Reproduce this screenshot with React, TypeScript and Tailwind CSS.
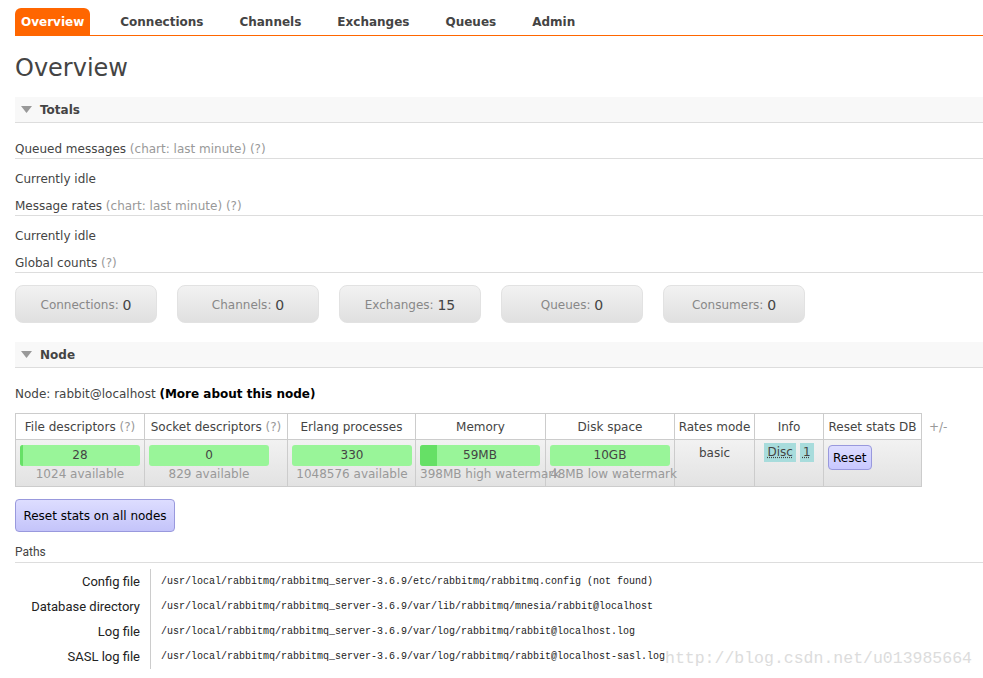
const tabs = ["Overview", "Connections", "Channels", "Exchanges", "Queues", "Admin"];

const counts = [
  { label: "Connections", value: 0 },
  { label: "Channels", value: 0 },
  { label: "Exchanges", value: 15 },
  { label: "Queues", value: 0 },
  { label: "Consumers", value: 0 },
];

const paths = [
  { label: "Config file", value: "/usr/local/rabbitmq/rabbitmq_server-3.6.9/etc/rabbitmq/rabbitmq.config (not found)" },
  { label: "Database directory", value: "/usr/local/rabbitmq/rabbitmq_server-3.6.9/var/lib/rabbitmq/mnesia/rabbit@localhost" },
  { label: "Log file", value: "/usr/local/rabbitmq/rabbitmq_server-3.6.9/var/log/rabbitmq/rabbit@localhost.log" },
  { label: "SASL log file", value: "/usr/local/rabbitmq/rabbitmq_server-3.6.9/var/log/rabbitmq/rabbit@localhost-sasl.log" },
];

function SectionHeader({ title }: Readonly<{ title: string }>) {
  return (
    <div className="flex h-[26px] items-center border-b border-[#ddd] bg-[#f8f8f8] pl-[6px]">
      <svg width="11" height="7" viewBox="0 0 11 7" className="mr-[8px]">
        <polygon points="0,0 11,0 5.5,7" fill="#999" />
      </svg>
      <span className="text-[12px] font-bold text-[#444]">{title}</span>
    </div>
  );
}

function Help() {
  return <span className="text-[#999]">(?)</span>;
}

function Bar({ value, sub, fill }: Readonly<{ value: string; sub: string; fill: number }>) {
  return (
    <div className="w-[120px]">
      <div className="relative h-[21px] overflow-hidden rounded-[3px] bg-[#99f599]">
        <div className="absolute left-0 top-0 h-full bg-[#66e066]" style={{ width: `${fill}px` }} />
        <div className="relative text-center leading-[21px] text-[#444]">{value}</div>
      </div>
      <div className="whitespace-nowrap text-center leading-[16px] text-[#999]">{sub}</div>
    </div>
  );
}

export default function App() {
  return (
    <div
      className="relative min-h-[678px] bg-white pl-[15px] text-[12px] text-[#444]"
      style={{ fontFamily: '"DejaVu Sans", Verdana, sans-serif' }}
    >
      {/* Tabs */}
      <div className="flex gap-[24px] border-b border-[#f60] pt-[8px]">
        {tabs.map((t, i) => (
          <div
            key={t}
            className={
              i === 0
                ? "flex h-[27px] items-center rounded-t-[6px] bg-[#f60] px-[6px] text-[12px] font-bold text-white"
                : "flex h-[27px] items-center px-[6px] text-[12px] font-bold text-[#444]"
            }
          >
            {t}
          </div>
        ))}
      </div>

      <h1 className="mt-[17px] h-[30px] text-[24px] leading-[30px] text-[#444]">Overview</h1>

      <div className="mt-[14px]">
        <SectionHeader title="Totals" />
      </div>

      <div className="mt-[18px] border-b border-[#ddd] pb-[1px] leading-[16px]">
        Queued messages <span className="text-[#999]">(chart: last minute)</span> <Help />
      </div>
      <div className="mt-[12px] leading-[16px]">Currently idle</div>
      <div className="mt-[11px] border-b border-[#ddd] pb-[1px] leading-[16px]">
        Message rates <span className="text-[#999]">(chart: last minute)</span> <Help />
      </div>
      <div className="mt-[12px] leading-[16px]">Currently idle</div>
      <div className="mt-[11px] border-b border-[#ddd] pb-[1px] leading-[16px]">
        Global counts <Help />
      </div>

      <div className="mt-[12px] flex gap-[20px]">
        {counts.map((c) => (
          <div
            key={c.label}
            className="flex h-[38px] w-[142px] items-center justify-center rounded-[8px] border border-[#e2e2e2] bg-gradient-to-b from-[#f2f2f2] to-[#e0e0e0] pt-[2px]"
          >
            <span className="text-[#888]">{c.label}:&nbsp;</span>
            <span className="text-[14px] text-[#444]">{c.value}</span>
          </div>
        ))}
      </div>

      <div className="mt-[19px]">
        <SectionHeader title="Node" />
      </div>

      <div className="mt-[18px] leading-[16px]">
        Node: rabbit@localhost <span className="font-bold text-black">(More about this node)</span>
      </div>

      <div className="mt-[11px] flex items-start">
        <table className="border-collapse border border-[#ccc]">
          <thead>
            <tr className="h-[26px] bg-white text-center font-normal">
              <th className="w-[129px] border border-[#ccc] font-normal">File descriptors <Help /></th>
              <th className="w-[143px] border border-[#ccc] font-normal">Socket descriptors <Help /></th>
              <th className="w-[128px] border border-[#ccc] font-normal">Erlang processes</th>
              <th className="w-[130px] border border-[#ccc] font-normal">Memory</th>
              <th className="w-[129px] border border-[#ccc] font-normal">Disk space</th>
              <th className="w-[80px] border border-[#ccc] font-normal">Rates mode</th>
              <th className="w-[69px] border border-[#ccc] font-normal">Info</th>
              <th className="w-[98px] border border-[#ccc] font-normal">Reset stats DB</th>
            </tr>
          </thead>
          <tbody>
            <tr className="h-[47px] bg-gradient-to-b from-[#f2f2f2] to-[#e2e2e2] align-top">
              <td className="border border-[#ccc] pl-[4px] pt-[5px]">
                <Bar value="28" sub="1024 available" fill={3} />
              </td>
              <td className="border border-[#ccc] pl-[4px] pt-[5px]">
                <Bar value="0" sub="829 available" fill={0} />
              </td>
              <td className="border border-[#ccc] pl-[4px] pt-[5px]">
                <Bar value="330" sub="1048576 available" fill={0} />
              </td>
              <td className="border border-[#ccc] pl-[4px] pt-[5px]">
                <Bar value="59MB" sub="398MB high watermark" fill={17} />
              </td>
              <td className="border border-[#ccc] pl-[4px] pt-[5px]">
                <Bar value="10GB" sub="48MB low watermark" fill={0} />
              </td>
              <td className="border border-[#ccc] pt-[4px] text-center">basic</td>
              <td className="border border-[#ccc] pt-[3px]">
                <div className="flex justify-center gap-[4px]">
                  <span className="bg-[#a8dcdc] px-[3px] leading-[19px] underline decoration-dotted underline-offset-[1px]">
                    Disc
                  </span>
                  <span className="bg-[#a8dcdc] px-[3px] leading-[19px] underline decoration-dotted underline-offset-[1px]">
                    1
                  </span>
                </div>
              </td>
              <td className="border border-[#ccc] pl-[4px] pt-[5px]">
                <button className="h-[25px] rounded-[4px] border border-[#9999dd] bg-gradient-to-b from-[#ddddff] to-[#c8c8ff] px-[4px] text-[12px] text-black">
                  Reset
                </button>
              </td>
            </tr>
          </tbody>
        </table>
        <span className="ml-[7px] mt-[5px] text-[#999]">+/-</span>
      </div>

      <button className="mt-[12px] h-[33px] w-[160px] rounded-[4px] border border-[#9999dd] bg-gradient-to-b from-[#ddddff] to-[#c4c4fa] text-[12px] text-black">
        Reset stats on all nodes
      </button>

      <div
        className="mt-[12px] border-b border-[#ddd] pb-[2px] text-[12px] leading-[16px]"
        style={{ fontFamily: "Roboto, sans-serif" }}
      >
        Paths
      </div>

      <div className="mt-[6px]">
        {paths.map((p) => (
          <div key={p.label} className="flex h-[25px] items-center">
            <div
              className="w-[135px] pr-[10px] text-right text-[13px] text-[#222]"
              style={{ fontFamily: "Roboto, sans-serif" }}
            >
              {p.label}
            </div>
            <div
              className="flex h-full items-center border-l border-[#ccc] pl-[10px] text-[10px] text-[#222]"
              style={{ fontFamily: '"Liberation Mono", monospace' }}
            >
              {p.value}
            </div>
          </div>
        ))}
      </div>

      <div
        className="absolute left-[665px] top-[647px] text-[16.5px] text-[#dcdcdc]"
        style={{ fontFamily: '"Liberation Mono", monospace' }}
      >
        http://blog.csdn.net/u013985664
      </div>
    </div>
  );
}
